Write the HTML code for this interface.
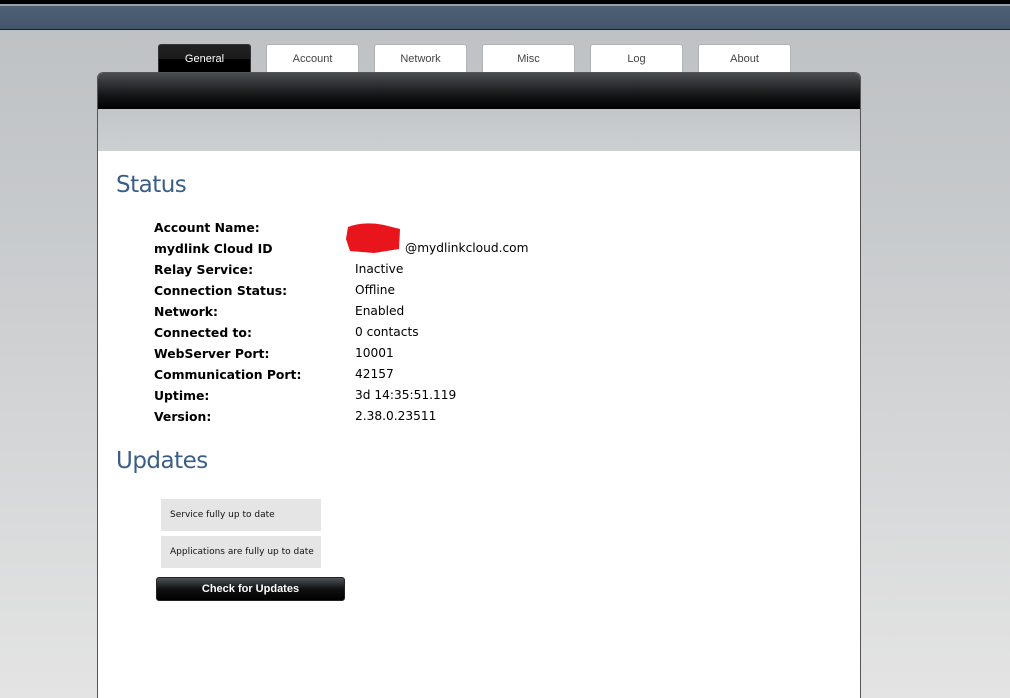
<!DOCTYPE html>
<html><head><meta charset="utf-8"><style>
*{margin:0;padding:0;box-sizing:border-box}
html,body{width:1010px;height:698px;overflow:hidden}
body{position:relative;font-family:"DejaVu Sans","Liberation Sans",sans-serif;background:linear-gradient(#bfc2c4 30px,#c6c9cb 200px,#e4e4e4 698px)}
.top{position:absolute;left:0;top:0;width:1010px;height:4px;background:#000}
.top2{position:absolute;left:0;top:4px;width:1010px;height:2px;background:#9aa1a8}
.bar{position:absolute;left:0;top:6px;width:1010px;height:24px;background:linear-gradient(#4e6074,#44566a);border-bottom:1px solid #1a1f26}
.tab{position:absolute;top:44px;width:93px;height:29px;background:#fff;border-radius:3px 3px 0 0;font:11px "Liberation Sans",sans-serif;color:#444;text-align:center;line-height:28px;border:1px solid #b0b3b5;border-bottom:none}
.tab.on{background:linear-gradient(#222 0,#1a1a1a 50%,#000 50%);color:#fff;border-color:#333}
.panel{position:absolute;left:97px;top:72px;width:764px;height:626px;border:1px solid #555;border-bottom:none;border-radius:6px 6px 0 0;background:#fff;overflow:hidden}
.ph{height:36px;background:linear-gradient(#4a4d50,#161718 60%,#000)}
.pg{height:42px;background:linear-gradient(#c3c6c8,#cdd0d1)}
h2{position:absolute;left:18px;font:normal 23px "DejaVu Sans",sans-serif;color:#3b5e88;letter-spacing:-0.5px}
.row{position:absolute;left:56px;font-size:12.4px;height:21px;color:#000}
.row b{position:absolute;left:0;white-space:nowrap}
.row span{position:absolute;left:201px;white-space:nowrap;font-size:12.2px}
.box{position:absolute;left:63px;width:160px;height:32px;background:#e5e5e5;font-size:9px;line-height:32px;padding-left:9px;color:#111;white-space:nowrap;overflow:hidden}
.btn{position:absolute;left:58px;top:504px;width:189px;height:24px;border-radius:3px;background:linear-gradient(#4d5358,#111 50%,#000);border:1px solid #222;color:#fff;font:bold 11px "Liberation Sans",sans-serif;text-align:center;line-height:22px}
</style></head><body>
<div class="top"></div><div class="top2"></div><div class="bar"></div>
<div class="tab on" style="left:158px">General</div>
<div class="tab" style="left:266px">Account</div>
<div class="tab" style="left:374px">Network</div>
<div class="tab" style="left:482px">Misc</div>
<div class="tab" style="left:590px">Log</div>
<div class="tab" style="left:698px">About</div>
<div class="panel">
<div class="ph"></div><div class="pg"></div>
<h2 style="top:99px">Status</h2>
<div class="row" style="top:147px"><b>Account Name:</b></div>
<div class="row" style="top:168px"><b>mydlink Cloud ID</b><span style="left:251px">@mydlinkcloud.com</span></div>
<svg style="position:absolute;left:246px;top:148px" width="58" height="34"><path d="M4 6 Q20 0 40 4 L56 8 L55 28 L30 32 L6 30 L2 18 Z" fill="#e8151c"/></svg>
<div class="row" style="top:189px"><b>Relay Service:</b><span>Inactive</span></div>
<div class="row" style="top:210px"><b>Connection Status:</b><span>Offline</span></div>
<div class="row" style="top:231px"><b>Network:</b><span>Enabled</span></div>
<div class="row" style="top:252px"><b>Connected to:</b><span>0 contacts</span></div>
<div class="row" style="top:273px"><b>WebServer Port:</b><span>10001</span></div>
<div class="row" style="top:294px"><b>Communication Port:</b><span>42157</span></div>
<div class="row" style="top:315px"><b>Uptime:</b><span>3d 14:35:51.119</span></div>
<div class="row" style="top:336px"><b>Version:</b><span>2.38.0.23511</span></div>
<h2 style="top:375px">Updates</h2>
<div class="box" style="top:426px">Service fully up to date</div>
<div class="box" style="top:463px">Applications are fully up to date</div>
<div class="btn">Check for Updates</div>
</div>
</body></html>
